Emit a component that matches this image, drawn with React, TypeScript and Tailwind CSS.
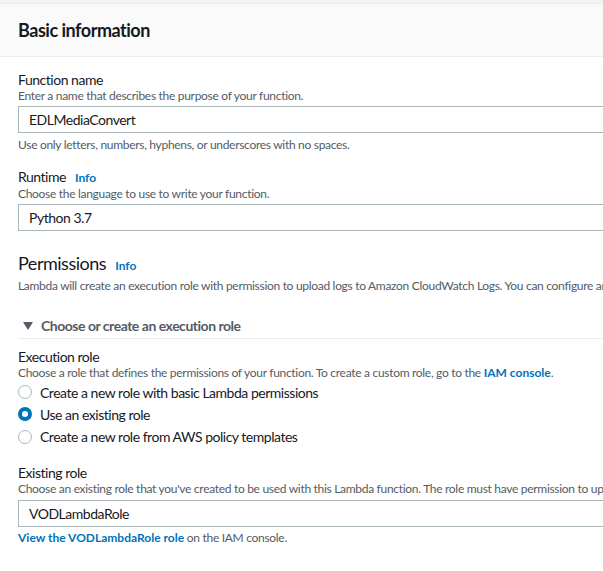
import React from "react";

function Radio({ checked }: { checked?: boolean }) {
  return checked ? (
    <span className="flex h-[14px] w-[14px] shrink-0 items-center justify-center rounded-full bg-[#0073bb]">
      <span className="h-[6px] w-[6px] rounded-full bg-white" />
    </span>
  ) : (
    <span className="h-[14px] w-[14px] shrink-0 rounded-full border border-[#aab7b8] bg-white" />
  );
}

function Info() {
  return <span className="ml-[9px] text-[12px] font-bold tracking-normal text-[#0073bb]">Info</span>;
}

const desc = "text-[12px] leading-[16px] tracking-[-0.025em] text-[#545b64]";

export default function App() {
  return (
    <div
      className="h-[571px] w-[603px] overflow-hidden bg-[#f2f3f3] pt-[3px] tracking-[-0.03em] text-[#16191f]"
      style={{ fontFamily: "Lato, 'Liberation Sans', sans-serif" }}
    >
      <div className="h-full w-[700px] border-t border-[#eaeded] bg-white">
        <div className="flex h-[53px] items-center border-b border-[#eaeded] bg-[#fafafa] pl-[18px]">
          <h2 className="text-[18px] font-bold leading-none">Basic information</h2>
        </div>
        <div className="pl-[18px]">
          <div className="pt-[15px]">
            <div className="text-[14px] leading-[16px]">Function name</div>
            <div className={desc}>Enter a name that describes the purpose of your function.</div>
            <div className="mt-[2px] flex h-[27px] items-center border border-[#aab7b8] pl-[10px] text-[14px]">
              EDLMediaConvert
            </div>
            <div className={`mt-[4px] ${desc}`}>
              Use only letters, numbers, hyphens, or underscores with no spaces.
            </div>
          </div>

          <div className="pt-[16px]">
            <div className="flex items-baseline text-[14px] leading-[16px]">
              Runtime
              <Info />
            </div>
            <div className={desc}>Choose the language to use to write your function.</div>
            <div className="mt-[2px] flex h-[27px] items-center border border-[#aab7b8] pl-[10px] text-[14px]">
              Python 3.7
            </div>
          </div>

          <div className="pt-[21px]">
            <div className="flex items-baseline text-[18px] leading-[22px]">
              Permissions
              <Info />
            </div>
            <div className={`mt-[1px] whitespace-nowrap ${desc}`}>
              Lambda will create an execution role with permission to upload logs to Amazon CloudWatch Logs. You can configure and modify permissions further.
            </div>
          </div>

          <div className="mt-[23px] flex h-[22px] items-start border-b border-[#eaeded] pl-[5px] text-[14px] font-bold leading-[18px] text-[#545b64]">
            <svg width="10" height="10" viewBox="0 0 10 10" className="mr-[8px] mt-[4px]">
              <path d="M0 1 H10 L5 9 Z" fill="#545b64" />
            </svg>
            Choose or create an execution role
          </div>

          <div className="pt-[10px]">
            <div className="text-[14px] leading-[16px]">Execution role</div>
            <div className={desc}>
              Choose a role that defines the permissions of your function. To create a custom role, go to the{" "}
              <span className="font-bold tracking-normal text-[#0073bb]">IAM console</span>.
            </div>
            <div className="flex flex-col text-[14px]">
              <label className="flex h-[22px] items-center gap-[8px]">
                <Radio />
                Create a new role with basic Lambda permissions
              </label>
              <label className="flex h-[22px] items-center gap-[8px]">
                <Radio checked />
                Use an existing role
              </label>
              <label className="flex h-[23px] items-center gap-[8px]">
                <Radio />
                Create a new role from AWS policy templates
              </label>
            </div>
          </div>

          <div className="pt-[17px]">
            <div className="text-[14px] leading-[16px]">Existing role</div>
            <div className={`whitespace-nowrap ${desc}`}>
              Choose an existing role that you've created to be used with this Lambda function. The role must have permission to upload logs to Amazon CloudWatch Logs.
            </div>
            <div className="mt-[3px] flex h-[27px] items-center border border-[#aab7b8] pl-[10px] text-[14px]">
              VODLambdaRole
            </div>
            <div className={`mt-[3px] ${desc}`}>
              <span className="font-bold tracking-normal text-[#0073bb]">View the VODLambdaRole role</span> on the IAM console.
            </div>
          </div>
        </div>
      </div>
    </div>
  );
}
